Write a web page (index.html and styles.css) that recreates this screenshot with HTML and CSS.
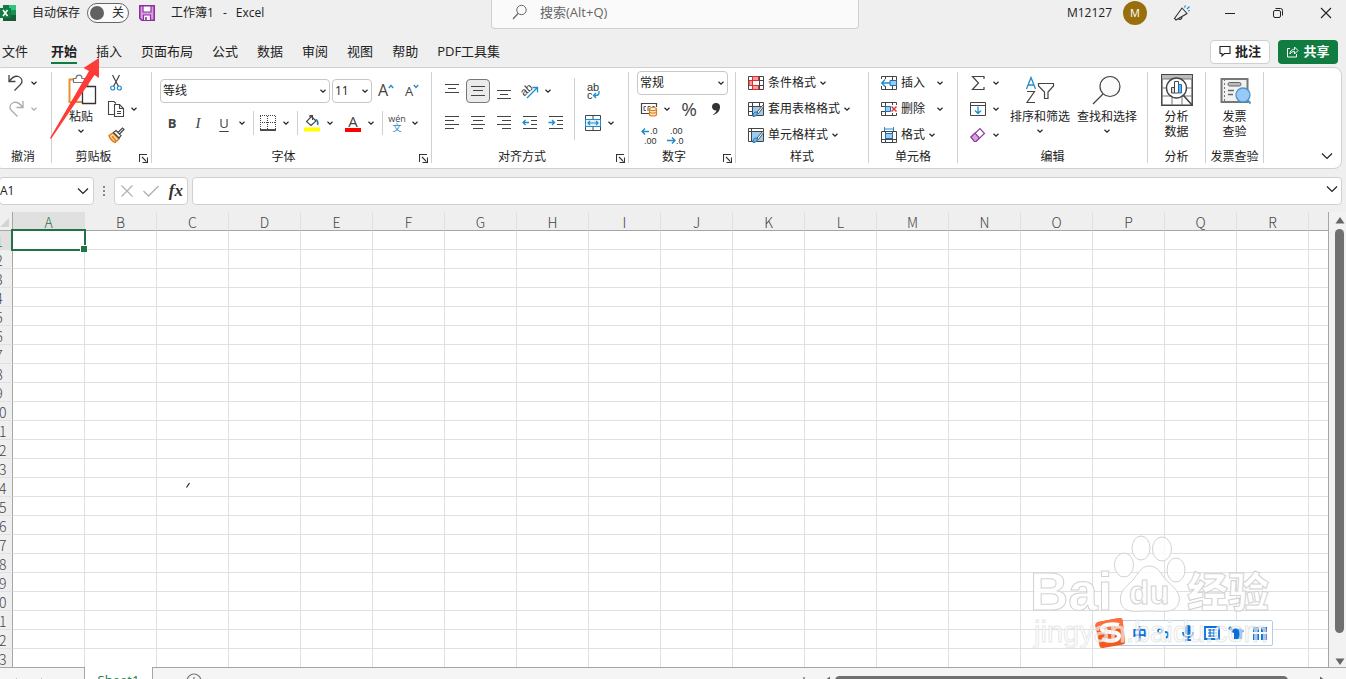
FILE: index.html
```html
<!DOCTYPE html>
<html lang="zh-CN">
<head>
    <meta charset="UTF-8">
    <meta name="viewport" content="width=device-width, initial-scale=1.0">
    <title>工作簿1 - Excel</title>
    <link rel="stylesheet" href="styles.css">
</head>
<body>
    <svg class="defs" width="0" height="0">
        <symbol id="chev" viewBox="0 0 8 8"><path d="M1.5 2.8L4 5.2L6.5 2.8" fill="none" stroke="currentColor" stroke-width="1.2"/></symbol>
        <symbol id="chev-big" viewBox="0 0 12 8"><path d="M1 1.5L6 6.5L11 1.5" fill="none" stroke="currentColor" stroke-width="1.2"/></symbol>
        <symbol id="launch" viewBox="0 0 9 9"><path d="M.5 8V.5H8M3 3L7.5 7.5M8.5 3.5V8.5H3.5" fill="none" stroke="#333" stroke-width="1.1"/></symbol>
        <symbol id="gridicon" viewBox="0 0 16 16"><path d="M.5 1.5H15.5V14.5H.5ZM.5 5.5H15.5M.5 10.5H15.5M4.5 1.5V14.5M11.5 1.5V14.5" fill="#fff" stroke="#444"/></symbol>
        <symbol id="brush" viewBox="0 0 16 16"><path d="M5 15C5 12 7 10 9 11.5C10 13.5 8 15.5 5 15.5Z" fill="#6ab4ec" stroke="#2072b8"/><path d="M9 11L15 4L16 5L10.5 12.5Z" fill="#fff" stroke="#555"/></symbol>
    </svg>

    <header class="titlebar">
        <div class="title-left">
            <svg class="logo" width="16" height="16" viewBox="0 0 16 16"><path d="M3 0H16V16H3Z" fill="#21a366"/><path d="M3 0H9V5H3Z" fill="#107c41"/><path d="M9 0H16V5H9Z" fill="#33c481"/><path d="M3 10H16V16H3Z" fill="#185c37"/><path d="M9 5H16V10H9Z" fill="#1a8f55"/><path d="M0 3H11V13H0Z" fill="#107c41"/><path d="M3 5L7.5 11M7.5 5L3 11" stroke="#fff" stroke-width="1.6"/></svg>
            <label for="autosave">自动保存</label>
            <label class="switch"><input type="checkbox" id="autosave"><span>关</span></label>
            <button class="save" aria-label="保存"><svg width="16" height="16" viewBox="0 0 16 16"><path d="M.8 .8H15.2V15.2H2.8L.8 13.2Z" fill="#d9a0e0" stroke="#8e2f9e" stroke-width="1.6"/><path d="M4 1H12V7H4Z" fill="#fff" stroke="#8e2f9e" stroke-width="1.2"/><path d="M4.5 15V10H11.5V15" fill="#fff" stroke="#8e2f9e" stroke-width="1.2"/><path d="M7 12V15" stroke="#8e2f9e" stroke-width="1.6"/></svg></button>
            <span class="doc"><span>工作簿1</span><span>-</span><span>Excel</span></span>
        </div>
        <div class="search">
            <svg width="16" height="16" viewBox="0 0 16 16"><circle cx="9.5" cy="6" r="4.7" fill="none" stroke="#666"/><path d="M6 9.5L1 15" stroke="#666" stroke-width="1.2"/></svg>
            <input type="text" aria-label="搜索" placeholder="搜索(Alt+Q)">
        </div>
        <div class="title-right">
            <span>M12127</span>
            <span class="avatar">M</span>
            <button class="win" aria-label="笔"><svg width="18" height="16" viewBox="0 0 18 16"><path d="M9 3L14 8.5L3 15L1.5 13.5ZM5 13.5C7 15.5 9 14 9 11.5" fill="none" stroke="#333" stroke-width="1.1"/><path d="M11.5 2.5L12.5 .5M14 4L16.5 1.5M15 6L17 5.5" stroke="#1e8bcd" stroke-width="1.2"/></svg></button>
            <button class="win" aria-label="最小化"><svg width="12" height="12"><path d="M1 6.5H11" stroke="#222"/></svg></button>
            <button class="win" aria-label="还原"><svg width="12" height="12"><rect x="1.5" y="3.5" width="7" height="7" rx="1.5" fill="none" stroke="#222"/><path d="M3.5 1.5H8.5Q10.5 1.5 10.5 3.5V8.5" fill="none" stroke="#222"/></svg></button>
            <button class="win" aria-label="关闭"><svg width="12" height="12"><path d="M1 1L11 11M11 1L1 11" stroke="#222" stroke-width="1.1"/></svg></button>
        </div>
    </header>

    <nav class="tabs">
        <a href="#">文件</a>
        <a href="#" class="active">开始</a>
        <a href="#">插入</a>
        <a href="#">页面布局</a>
        <a href="#">公式</a>
        <a href="#">数据</a>
        <a href="#">审阅</a>
        <a href="#">视图</a>
        <a href="#">帮助</a>
        <a href="#">PDF工具集</a>
        <div class="tab-actions">
            <button class="comment"><svg width="12" height="12" viewBox="0 0 12 12"><path d="M1 1.5H11V8.5H5.5L3 11V8.5H1Z" fill="none" stroke="#222" stroke-width="1.1"/></svg>批注</button>
            <button class="share"><svg width="13" height="13" viewBox="0 0 13 13"><path d="M4 3.5H1.5V12H10.5V9M4 9C4 5.5 6 4.5 8.5 4.5V2L12 5.5L8.5 9V6.5C6.5 6.5 5 7 4 9Z" fill="none" stroke="#fff"/></svg>共享</button>
        </div>
    </nav>

    <section class="ribbon">
        <div class="group g-undo">
            <div class="body rows3">
                <div class="row"><button class="ic" aria-label="撤消"><svg width="18" height="18" viewBox="0 0 18 18"><path d="M2 1V7.5H8.5M2.3 7.2C5 3.5 8 1.5 11.5 2.5C15.5 4 16 8 13.5 10.5L7.5 16.5" fill="none" stroke="#444" stroke-width="1.3"/></svg></button><button class="dd" aria-label="更多"><svg><use href="#chev"/></svg></button></div>
                <div class="row off"><button class="ic" aria-label="恢复"><svg width="18" height="18" viewBox="0 0 18 18"><path d="M16 1V7.5H9.5M15.7 7.2C13 3.5 10 1.5 6.5 2.5C2.5 4 2 8 4.5 10.5L10.5 16.5" fill="none" stroke="#aaa" stroke-width="1.3"/></svg></button><button class="dd" aria-label="更多"><svg><use href="#chev"/></svg></button></div>
            </div>
            <div class="foot"><span>撤消</span></div>
        </div>

        <div class="group g-clip">
            <div class="body">
                <button class="big paste"><svg width="30" height="32" viewBox="0 0 30 32"><path d="M3.500 5.500H21.500V28H3.500Z" fill="#fff" stroke="#e8912d" stroke-width="2"/><path d="M7.500 8.500V4.500H10C10 0 16 0 16 4.500H18.500V8.500Z" fill="#fff" stroke="#777" stroke-width="1.2"/><path d="M16.500 12.500H29.500V29.500H16.500Z" fill="#fff" stroke="#333" stroke-width="1.3"/></svg><span>粘贴</span><svg class="ch"><use href="#chev"/></svg></button>
                <div class="rows3">
                    <div class="row"><button class="ic" aria-label="剪切"><svg width="12" height="16" viewBox="0 0 12 16"><path d="M2.5 0L8.5 11.5M9.5 0L3.5 11.5" stroke="#444" stroke-width="1.2"/><circle cx="2.7" cy="13" r="2" fill="none" stroke="#1e8bcd" stroke-width="1.2"/><circle cx="9.3" cy="13" r="2" fill="none" stroke="#1e8bcd" stroke-width="1.2"/></svg></button></div>
                    <div class="row"><button class="ic" aria-label="复制"><svg width="18" height="18" viewBox="0 0 18 18"><path d="M7 14.5H1.5V1.5H7L9 3.5M7.5 4.5H12.5L16.5 8.5V16.5H7.5ZM12.5 4.5V8.5H16.5M10 11.5H14M10 13.5H14" fill="none" stroke="#444" stroke-width="1.1"/></svg></button><button class="dd" aria-label="更多"><svg><use href="#chev"/></svg></button></div>
                    <div class="row"><button class="ic" aria-label="格式刷"><svg width="17" height="16" viewBox="0 0 17 16"><path d="M5 6L11 12L7 15.5C4 14 2 12 1 8.5Z" fill="#fbd9a8" stroke="#e07b14" stroke-width="1.4"/><path d="M4 9L8 14" stroke="#e07b14" stroke-width="1.3"/><path d="M5.5 5.5L8 3.5L13 8.5L11 11ZM10 5.5L14.5 1L16 2.5L11.5 7" fill="#fff" stroke="#444" stroke-width="1.2"/></svg></button></div>
                </div>
            </div>
            <div class="foot"><span>剪贴板</span><button aria-label="剪贴板设置"><svg><use href="#launch"/></svg></button></div>
        </div>

        <div class="group g-font">
            <div class="body rows2">
                <div class="row">
                    <div class="combo font-name"><select aria-label="字体"><option>等线</option></select><svg><use href="#chev"/></svg></div>
                    <div class="combo font-size"><select aria-label="字号"><option>11</option></select><svg><use href="#chev"/></svg></div>
                    <button class="ic grow" aria-label="增大字号">A<svg width="6" height="5"><path d="M.8 4L3 1.5L5.2 4" fill="none" stroke="#1e8bcd" stroke-width="1.3"/></svg></button>
                    <button class="ic shrink" aria-label="减小字号">A<svg width="6" height="5"><path d="M.8 1L3 3.5L5.2 1" fill="none" stroke="#1e8bcd" stroke-width="1.3"/></svg></button>
                </div>
                <div class="row">
                    <div class="biu"><button class="ic b">B</button><button class="ic i">I</button><button class="ic u">U</button></div><button class="dd" aria-label="下划线"><svg><use href="#chev"/></svg></button>
                    <i class="sep"></i>
                    <button class="ic" aria-label="边框"><svg width="16" height="16" viewBox="0 0 16 16"><path d="M0 .5H16M0 7.5H16M.5 1V14M7.5 1V14M15.5 1V14" stroke="#444" stroke-dasharray="1 1"/><path d="M0 15H16" stroke="#111" stroke-width="1.5"/></svg></button><button class="dd" aria-label="更多"><svg><use href="#chev"/></svg></button>
                    <i class="sep"></i>
                    <button class="ic" aria-label="填充颜色"><svg width="16" height="18" viewBox="0 0 16 18"><path d="M7.5 2.5L12 7L7 11.5L2.5 7.5ZM6 5V1.5H8.5V6" fill="none" stroke="#444" stroke-width="1.1"/><path d="M11.5 5.5C14 6 14 9 13.5 11" fill="none" stroke="#1e6fb0" stroke-width="1.6"/><path d="M0 13.5H16V17.5H0Z" fill="#ff0"/></svg></button><button class="dd" aria-label="更多"><svg><use href="#chev"/></svg></button>
                    <button class="ic color" aria-label="字体颜色">A</button><button class="dd" aria-label="更多"><svg><use href="#chev"/></svg></button>
                    <i class="sep"></i>
                    <button class="ic wen"><span>wén</span><b>文</b></button><button class="dd" aria-label="更多"><svg><use href="#chev"/></svg></button>
                </div>
            </div>
            <div class="foot"><span>字体</span><button aria-label="字体设置"><svg><use href="#launch"/></svg></button></div>
        </div>

        <div class="group g-align">
            <div class="body">
                <div class="rows2">
                    <div class="row gap2">
                        <button class="ic" aria-label="顶端对齐"><svg width="16" height="16"><path d="M1 1.5H15M4 5.5H12M1 9.5H15" stroke="#444"/></svg></button>
                        <button class="ic on" aria-label="垂直居中"><svg width="16" height="16"><path d="M1 3.5H15M3 7.5H13M1 12.5H15" stroke="#444"/></svg></button>
                        <button class="ic" aria-label="底端对齐"><svg width="16" height="16"><path d="M1 7.5H15M4 11.5H12M1 15.5H15" stroke="#444"/></svg></button>
                        <div class="row"><button class="ic" aria-label="方向"><svg width="18" height="18" viewBox="0 0 18 18"><text class="tiny" x="0" y="12" font-size="11" transform="rotate(-40 5 9)">ab</text><path d="M6 16L16 6M11.5 5.5H16.5V10.5" fill="none" stroke="#1e8bcd" stroke-width="1.3"/></svg></button><button class="dd" aria-label="更多"><svg><use href="#chev"/></svg></button></div>
                    </div>
                    <div class="row gap2">
                        <button class="ic" aria-label="左对齐"><svg width="16" height="16"><path d="M1 1.5H15M1 5.5H10M1 9.5H15M1 13.5H10" stroke="#444"/></svg></button>
                        <button class="ic" aria-label="居中"><svg width="16" height="16"><path d="M1 1.5H15M3 5.5H13M1 9.5H15M3 13.5H13" stroke="#444"/></svg></button>
                        <button class="ic" aria-label="右对齐"><svg width="16" height="16"><path d="M1 1.5H15M6 5.5H15M1 9.5H15M6 13.5H15" stroke="#444"/></svg></button>
                        <button class="ic" aria-label="减少缩进"><svg width="16" height="16"><path d="M1 1.5H15M9 5.5H15M9 9.5H15M1 13.5H15" stroke="#444"/><path d="M1.5 7.5H7M3.5 5L1 7.5L3.5 10" fill="none" stroke="#1e8bcd" stroke-width="1.3"/></svg></button>
                        <button class="ic" aria-label="增加缩进"><svg width="16" height="16"><path d="M1 1.5H15M9 5.5H15M9 9.5H15M1 13.5H15" stroke="#444"/><path d="M.5 7.5H6M4 5L6.5 7.5L4 10" fill="none" stroke="#1e8bcd" stroke-width="1.3"/></svg></button>
                    </div>
                </div>
                <i class="sep tall"></i>
                <div class="rows2">
                    <div class="row"><button class="ic" aria-label="自动换行"><svg width="16" height="18" viewBox="0 0 16 18"><text class="tiny" x="2" y="9" font-size="11">ab</text><text class="tiny" x="2" y="17" font-size="11">c</text><path d="M14 9V10.5Q14 13.500 11 13.500H9M11 11L8.500 13.500L11 16" fill="none" stroke="#1e8bcd" stroke-width="1.3"/></svg></button></div>
                    <div class="row"><button class="ic" aria-label="合并后居中"><svg width="16" height="16" viewBox="0 0 16 16"><path d="M.5 .5H15.5V15.5H.5ZM8 .5V4M8 12V15.5" fill="none" stroke="#444"/><path d="M.5 4.5H15.5V11.5H.5Z" fill="#e3f1fb" stroke="#1e8bcd"/><path d="M3 8H13M5 6L3 8L5 10M11 6L13 8L11 10" fill="none" stroke="#1e8bcd" stroke-width="1.2"/></svg></button><button class="dd" aria-label="更多"><svg><use href="#chev"/></svg></button></div>
                </div>
            </div>
            <div class="foot"><span>对齐方式</span><button aria-label="对齐设置"><svg><use href="#launch"/></svg></button></div>
        </div>

        <div class="group g-num">
            <div class="body rows3">
                <div class="row"><div class="combo num-format"><select aria-label="数字格式"><option>常规</option></select><svg><use href="#chev"/></svg></div></div>
                <div class="row">
                    <button class="ic" aria-label="会计数字格式"><svg width="18" height="16" viewBox="0 0 18 16"><path d="M16.5 6V2.5H1.5V12.5H9" fill="none" stroke="#444" stroke-width="1.2"/><path d="M6 5.5H4V9.5H6M8 10V5.5H10.5M12.5 5.5H14.5" fill="none" stroke="#555"/><path d="M9.5 8V13.5C9.5 15.5 16.5 15.5 16.5 13.5V8" fill="#fde3c4" stroke="#e07b14" stroke-width="1.2"/><ellipse cx="13" cy="8" rx="3.5" ry="1.5" fill="#fff" stroke="#e07b14" stroke-width="1.2"/><path d="M9.5 11C10.5 12.5 15.5 12.5 16.5 11" fill="none" stroke="#e07b14"/></svg></button><button class="dd" aria-label="更多"><svg><use href="#chev"/></svg></button>
                    <button class="ic pct">%</button>
                    <button class="ic comma" aria-label="千位分隔"><svg width="10" height="14" viewBox="0 0 10 14"><path d="M5 1A3.7 3.7 0 1 0 5.5 8.3C5 10.5 3.5 12 1.5 13C6 12.5 9 9 9 5A4 4 0 0 0 5 1Z" fill="#333"/></svg></button>
                </div>
                <div class="row gap2">
                    <button class="ic" aria-label="增加小数位数"><svg width="17" height="17" viewBox="0 0 17 17"><path d="M1 4.5H8M4 1.5L1 4.5L4 7.5" fill="none" stroke="#1e8bcd" stroke-width="1.4"/><text class="tiny" x="9" y="7" font-size="9">.0</text><text class="tiny" x="3" y="17" font-size="9">.00</text></svg></button>
                    <button class="ic" aria-label="减少小数位数"><svg width="17" height="17" viewBox="0 0 17 17"><text class="tiny" x="3" y="7" font-size="9">.00</text><path d="M0 13.500H7.500M5 10.500L8 13.500L5 16.500" fill="none" stroke="#1e8bcd" stroke-width="1.4"/><text class="tiny" x="9" y="17" font-size="9">.0</text></svg></button>
                </div>
            </div>
            <div class="foot"><span>数字</span><button aria-label="数字设置"><svg><use href="#launch"/></svg></button></div>
        </div>

        <div class="group g-style">
            <div class="body rows3">
                <button class="item"><svg width="16" height="16"><use href="#gridicon"/><path d="M4.5 1.5H10.5V5.5H4.5ZM1 5.5H4.5V10.5H1ZM4.5 10.5H10.5V14.5H4.5Z" fill="#ff9b9b" stroke="#d92c2c"/></svg>条件格式<svg class="ch"><use href="#chev"/></svg></button>
                <button class="item"><svg width="16" height="16"><use href="#gridicon"/><path d="M5 6H15V14H5Z" fill="#9accf2"/><use href="#brush"/></svg>套用表格格式<svg class="ch"><use href="#chev"/></svg></button>
                <button class="item"><svg width="16" height="16"><path d="M.5 1.5H15.5V14.5H.5ZM.5 4.5H15.5M3.5 1.5V14.5" fill="#fff" stroke="#444"/><path d="M4 5H15V14H4Z" fill="#9accf2"/><use href="#brush"/></svg>单元格样式<svg class="ch"><use href="#chev"/></svg></button>
            </div>
            <div class="foot"><span>样式</span></div>
        </div>

        <div class="group g-cell">
            <div class="body rows3">
                <button class="item wide"><svg width="16" height="16"><use href="#gridicon"/><path d="M0 4H9V11H0Z" fill="#fff"/><path d="M9 5.5H15.5V10.5H9Z" fill="#9accf2" stroke="#1e6fb0"/><path d="M.5 8H9M4 4.5L.8 8L4 11.5" fill="none" stroke="#1e8bcd" stroke-width="1.4"/></svg>插入<svg class="ch"><use href="#chev"/></svg></button>
                <button class="item wide"><svg width="16" height="16"><use href="#gridicon"/><path d="M0 6H5V10H0ZM9 4H16V12H9Z" fill="#fff"/><path d="M4.5 5.5H9.5V10.5H4.5Z" fill="#9accf2" stroke="#1e6fb0"/><path d="M10.5 5.5L15.5 10.5M15.5 5.5L10.5 10.5" stroke="#e03a3a" stroke-width="1.5"/></svg>删除<svg class="ch"><use href="#chev"/></svg></button>
                <button class="item"><svg width="16" height="16"><path d="M.5 4.5H15.5V15.5H.5ZM.5 12.5H15.5M4.5 4.5V15.5M11.5 4.5V15.5" fill="#fff" stroke="#444"/><path d="M4.5 6.5H11.5V11.5H4.5Z" fill="#9accf2" stroke="#1e6fb0"/><path d="M3.5 0V4M12.5 0V4M3.5 2H12.5" stroke="#1e8bcd"/></svg>格式<svg class="ch"><use href="#chev"/></svg></button>
            </div>
            <div class="foot"><span>单元格</span></div>
        </div>

        <div class="group g-edit">
            <div class="body">
                <div class="rows3">
                    <div class="row"><button class="ic" aria-label="求和"><svg width="14" height="16"><path d="M13 4V1.5H1.5L7.5 8L1.5 14.5H13V12" fill="none" stroke="#444" stroke-width="1.2"/></svg></button><button class="dd" aria-label="更多"><svg><use href="#chev"/></svg></button></div>
                    <div class="row"><button class="ic" aria-label="填充"><svg width="16" height="14"><path d="M.5 .5H15.5V13.5H.5ZM.5 3.5H15.5" fill="none" stroke="#444"/><path d="M8 4.5V11.5M5 8.5L8 11.5L11 8.5" fill="none" stroke="#1e8bcd" stroke-width="1.3"/></svg></button><button class="dd" aria-label="更多"><svg><use href="#chev"/></svg></button></div>
                    <div class="row"><button class="ic" aria-label="清除"><svg width="16" height="16"><path d="M1 10L10 1.5L14.5 6.5L6 14.5H4.5Z" fill="#fff" stroke="#8e3fa0" stroke-width="1.2"/><path d="M1 10L5 6L9.5 11L6 14.5H4.5Z" fill="#d9a0e0" stroke="#8e3fa0" stroke-width="1.2"/></svg></button><button class="dd" aria-label="更多"><svg><use href="#chev"/></svg></button></div>
                </div>
                <button class="big"><svg width="30" height="32" viewBox="0 0 30 32"><path d="M1.5 15L6 3.5L10.5 15M3 11H9" fill="none" stroke="#1e8bcd" stroke-width="1.3"/><path d="M2 17.5H9.5L2 28.5H10" fill="none" stroke="#444" stroke-width="1.2"/><path d="M13.5 9.5H28.5V12L23 18V24.5H19.5V18L13.5 12Z" fill="#fff" stroke="#444" stroke-width="1.2"/></svg><span>排序和筛选</span><svg class="ch"><use href="#chev"/></svg></button>
                <button class="big find"><svg width="30" height="32" viewBox="0 0 30 32"><circle cx="18" cy="12.5" r="10" fill="#fafafa" stroke="#444" stroke-width="1.2"/><path d="M11 20L1 30" stroke="#444" stroke-width="1.3"/></svg><span>查找和选择</span><svg class="ch"><use href="#chev"/></svg></button>
            </div>
            <div class="foot"><span>编辑</span></div>
        </div>

        <div class="group g-tool">
            <div class="body">
                <button class="big"><svg width="32" height="32" viewBox="0 0 32 32"><path d="M.8 .8H31.2V31.2H.8Z" fill="#fff" stroke="#444" stroke-width="1.5"/><path d="M1 1H31V5H1Z" fill="#bbb"/><path d="M1 5H31M1 14H31M1 22H31M11 22V31M21 22V31" stroke="#777"/><circle cx="15.5" cy="14" r="10" fill="#fff" stroke="#444" stroke-width="1.4"/><path d="M22.5 21.5L31 31" stroke="#444" stroke-width="1.6"/><path d="M10.5 13.5H13.5V19H10.5Z" fill="#ddd" stroke="#444"/><path d="M13.5 7.5H17.5V19H13.5Z" fill="#fff" stroke="#444"/><path d="M17.5 10.5H20.5V19H17.5Z" fill="#6ab4ec" stroke="#1e6fb0"/></svg><span>分析<br>数据</span></button>
            </div>
            <div class="foot"><span>分析</span></div>
        </div>

        <div class="group g-tool">
            <div class="body">
                <button class="big"><svg width="32" height="32" viewBox="0 0 32 32"><path d="M2.500 5H28.500V28H2.500Z" fill="#f2f2f2" stroke="#777" stroke-width="2"/><path d="M5.5 5V28" stroke="#777" stroke-dasharray="2 2"/><rect x="9" y="8.5" width="13" height="3.5" rx="1.7" fill="#bbb" stroke="#666"/><path d="M9 16.5H15M9 20.5H14" stroke="#666" stroke-width="1.3"/><circle cx="24" cy="21" r="7" fill="#99c9f7" stroke="#4a94cc" stroke-width="1.3"/><path d="M28.500 26L31.500 29.500" stroke="#4a94cc" stroke-width="2"/></svg><span>发票<br>查验</span></button>
            </div>
            <div class="foot"><span>发票查验</span></div>
        </div>

        <button class="collapse" aria-label="折叠功能区"><svg width="12" height="8"><use href="#chev-big"/></svg></button>
    </section>

    <section class="formula-bar">
        <div class="box name-box"><input type="text" aria-label="名称框" value="A1"><svg width="12" height="8"><use href="#chev-big"/></svg></div>
        <svg class="dots" width="4" height="12"><path d="M1 1H3V3H1ZM1 5H3V7H1ZM1 9H3V11H1Z" fill="#888"/></svg>
        <div class="box fx">
            <button aria-label="取消"><svg width="12" height="12"><path d="M.5 .5L11.5 11.5M11.5 .5L.5 11.5" stroke="#b0b0b0" stroke-width="1.2"/></svg></button>
            <button aria-label="输入"><svg width="16" height="12"><path d="M.5 6L5.5 11L15.5 1" fill="none" stroke="#b0b0b0" stroke-width="1.3"/></svg></button>
            <button class="fn">fx</button>
        </div>
        <div class="box formula"><input type="text" aria-label="编辑栏"><svg width="12" height="8"><use href="#chev-big"/></svg></div>
    </section>

    <main class="sheet">
        <div class="viewport">
            <table>
                <thead><tr id="cols"><th class="corner"><svg width="9" height="9"><path d="M9 0V9H0Z" fill="#d4d4d4"/></svg></th></tr></thead>
                <tbody id="rows"></tbody>
            </table>
        </div>
        <div class="vscroll">
            <svg width="10" height="8"><path d="M5 1L9.5 7.5H.5Z" fill="#666"/></svg>
            <i class="thumb"></i>
            <svg width="10" height="8"><path d="M5 7L9.5 .5H.5Z" fill="#666"/></svg>
        </div>
    </main>

    <footer class="sheet-tabs">
        <div class="nav">
            <svg width="6" height="10"><path d="M5 1L1 5L5 9" fill="none" stroke="#bbb"/></svg>
            <svg width="6" height="10"><path d="M1 1L5 5L1 9" fill="none" stroke="#bbb"/></svg>
        </div>
        <button class="sheet-tab">Sheet1</button>
        <div class="add"><button aria-label="新工作表"><svg width="16" height="16"><circle cx="8" cy="8" r="7" fill="none" stroke="#777" stroke-width="1.2"/><path d="M8 4V12M4 8H12" stroke="#777" stroke-width="1.2"/></svg></button></div>
        <div class="hscroll">
            <svg class="dots" width="4" height="12"><path d="M1 1H3V3H1ZM1 5H3V7H1ZM1 9H3V11H1Z" fill="#999"/></svg>
            <svg width="8" height="10"><path d="M1 5L7 .5V9.5Z" fill="#666"/></svg>
            <i class="thumb"></i>
            <svg width="8" height="10"><path d="M7 5L1 .5V9.5Z" fill="#666"/></svg>
        </div>
    </footer>

    <!-- 输入法工具条 -->
    <div class="ime">
        <svg class="sogou" width="32" height="32" viewBox="0 0 32 32"><path d="M4 5L25 1Q28 .5 28.5 3L31 24Q31.5 27 29 27.5L9 31Q6 31.5 5.5 29L1.5 9Q1 6 4 5Z" fill="#f4581c"/><path d="M4 5L25 1Q28 .5 28.5 3L29.5 11L2.5 14L1.5 9Q1 6 4 5Z" fill="#fa6f3c"/><path d="M25 8C17 6 8 8 8 12C8 17 25 13 25 19C25 24 15 25 8 22" fill="none" stroke="#fff" stroke-width="4"/></svg>
        <b>中</b>
        <svg width="16" height="16"><circle cx="4" cy="6" r="2" fill="none" stroke="#0a6fdc" stroke-width="1.5"/><path d="M9 7C13 7 13 11 10 13" fill="none" stroke="#0a6fdc" stroke-width="2"/></svg>
        <svg width="16" height="16"><rect x="5" y="0" width="6" height="10" rx="3" fill="#0a6fdc"/><path d="M3 7C3 14 13 14 13 7M8 12V15M5 15H11" fill="none" stroke="#0a6fdc" stroke-width="1.8"/></svg>
        <svg width="16" height="16"><path d="M1 2H15V14H1Z" fill="none" stroke="#0a6fdc" stroke-width="1.8"/><path d="M4 5H13M4 8H13M4 11H13M6 4V12M10 4V12" stroke="#0a6fdc" stroke-width="1.2"/></svg>
        <svg width="16" height="16"><path d="M5 4L8 3Q10 5 12 3L16 6L14 8V14H6V8L3 7Z" fill="#0a6fdc"/><circle cx="2.5" cy="3.5" r="2" fill="#0a6fdc"/></svg>
        <svg width="16" height="16"><path d="M1 2H7V7H1ZM9 2H15V7H9ZM1 9H7V15H1ZM9 9H15V15H9Z" fill="#0a6fdc"/></svg>
    </div>

    <svg class="watermark" width="250" height="124" viewBox="0 0 250 124">
        <g class="wm">
            <ellipse cx="99" cy="35" rx="9.5" ry="12"/><ellipse cx="116" cy="18" rx="9" ry="12"/>
            <ellipse cx="137" cy="19" rx="9.5" ry="12"/><ellipse cx="151" cy="40" rx="9" ry="12"/>
            <path d="M124 36C133 36 136 44 141 50C149 57 156 63 154 72C151 84 138 81 124 81C111 81 99 84 96 73C93 62 101 57 108 50C113 44 116 36 124 36Z"/>
            <text class="wm-latin" x="5" y="80" font-size="53">Bai</text>
            <text class="wm-latin" x="104" y="74" font-size="33">du</text>
            <text class="wm-cn" x="162" y="77" font-size="41">经验</text>
        </g>
        <text class="wm-url" x="9" y="112" font-size="29">jingyan.baidu.com</text>
    </svg>

    <svg class="arrow" width="54" height="84" viewBox="0 0 54 84"><path d="M50 1L34.5 11L40 14L1 81L2 82L45.5 18L50 21Z" fill="#ff3b38"/></svg>

    <script src="script.js"></script>
</body>
</html>
```
FILE: styles.css
```css
* {
    box-sizing: border-box;
}

body {
    margin: 0;
    height: 100vh;
    overflow: hidden;
    display: flex;
    flex-direction: column;
    position: relative;
    background-color: #efefef;
    color: #222;
    font-family: "Open Sans", "Noto Sans CJK SC", sans-serif;
    font-size: 12px;
    line-height: 16px;
}

body > * {
    flex-shrink: 0;
}

button, input, select {
    font: inherit;
    color: inherit;
    background: none;
    border: none;
    padding: 0;
    margin: 0;
    outline: none;
}

button {
    display: flex;
    align-items: center;
    justify-content: center;
}

svg {
    display: block;
    flex-shrink: 0;
    overflow: visible;
}

.defs {
    position: absolute;
}

/* 标题栏 */
.titlebar {
    display: grid;
    grid-template-columns: 1fr 368px 1fr;
    height: 29px;
}

.title-left, .title-right {
    display: flex;
    align-items: center;
    padding-bottom: 4px;
}

.title-left label {
    margin-left: 16px;
}

.title-left .switch {
    display: flex;
    align-items: center;
    gap: 8px;
    width: 42px;
    height: 20px;
    margin-left: 7px;
    padding-left: 2px;
    border: 1px solid #666;
    border-radius: 10px;
    background-color: #fafafa;
}

.switch input {
    appearance: none;
    width: 14px;
    height: 14px;
    border-radius: 50%;
    background-color: #616161;
}

.save {
    margin: 0 16px 0 10px;
}

.doc {
    display: flex;
    gap: 9px;
}

.search {
    display: flex;
    align-items: center;
    gap: 12px;
    margin-left: 2px;
    margin-right: -2px;
    padding: 0 20px 4px;
    border: 1px solid #d0d0d0;
    border-top: none;
    border-radius: 0 0 4px 4px;
    background-color: #fafafa;
    font-size: 13px;
}

.search input {
    flex: 1;
}

.search input::placeholder {
    color: #666;
}

.title-right {
    justify-content: flex-end;
    gap: 8px;
}

.avatar {
    width: 24px;
    height: 24px;
    margin: 0 7px 0 3px;
    border-radius: 50%;
    background-color: #986f0b;
    color: #fff;
    font-size: 11px;
    line-height: 24px;
    text-align: center;
}

.win {
    width: 40px;
    height: 24px;
}

/* 选项卡 */
.tabs {
    display: flex;
    align-items: flex-start;
    gap: 19px;
    height: 38px;
    padding: 11px 8px 0 2px;
    font-size: 13px;
}

.tabs a {
    padding: 2px 0;
    color: #222;
    text-decoration: none;
    line-height: 18px;
    border-bottom: 2px solid transparent;
}

.tabs .active {
    margin-left: 4px;
    font-weight: bold;
    border-color: #107c41;
}

.tab-actions {
    display: flex;
    gap: 8px;
    margin-left: auto;
}

.tab-actions button {
    gap: 4px;
    width: 60px;
    height: 24px;
    padding-bottom: 2px;
    border-radius: 4px;
    font-weight: bold;
}

.comment {
    border: 1px solid #d0d0d0;
    background-color: #fff;
}

.tab-actions .share {
    background-color: #107c41;
    color: #fff;
}

/* 功能区 */
.ribbon {
    display: flex;
    height: 102px;
    margin: 0 4px 0 -6px;
    padding: 4px 0;
    border: 1px solid #d0d0d0;
    border-radius: 8px;
    background-color: #fff;
}

.group {
    display: flex;
    flex-direction: column;
    height: 91px;
    border-right: 1px solid #d0d0d0;
}

.body {
    display: flex;
    flex: 1;
}

.foot {
    display: flex;
    height: 15px;
    line-height: 17px;
}

.foot span {
    flex: 1;
    text-align: center;
    white-space: nowrap;
}

.foot button {
    width: 16px;
    align-items: flex-end;
}

.foot svg {
    width: 9px;
    height: 9px;
}

.row {
    display: flex;
    align-items: center;
}

.gap2 {
    gap: 2px;
}

.rows3 {
    display: flex;
    flex-direction: column;
    gap: 4px;
}

.rows3 > * {
    height: 22px;
}

.rows2 {
    display: flex;
    flex-direction: column;
    gap: 8px;
    padding-top: 7px;
}

.rows2 > * {
    height: 24px;
}

.ic {
    width: 24px;
    height: 24px;
    color: #444;
}

.dd {
    width: 12px;
    height: 24px;
}

.dd svg, .combo svg, .ch {
    width: 8px;
    height: 8px;
}

.off {
    color: #aaa;
}

.on {
    border: 1px solid #777;
    border-radius: 4px;
    background-color: #ebebeb;
}

.sep {
    width: 1px;
    height: 24px;
    margin: 0 2px 0 5px;
    background-color: #d0d0d0;
}

.tiny {
    font-family: "Liberation Sans", sans-serif;
    fill: #333;
}

.combo {
    display: flex;
    align-items: center;
    height: 24px;
    padding: 0 2px;
    border: 1px solid #c8c8c8;
    border-radius: 4px;
}

.combo select {
    flex: 1;
    min-width: 0;
    appearance: none;
}

.big {
    flex-direction: column;
    justify-content: flex-start;
    align-items: center;
    padding-top: 2px;
    line-height: 15px;
    white-space: nowrap;
}

.big > svg:first-child {
    margin-bottom: 3px;
}

.big .ch {
    margin-top: 3px;
}

.item {
    gap: 4px;
    align-items: center;
    justify-content: flex-start;
    white-space: nowrap;
}

.item .ch {
    margin-left: -1px;
}

.wide .ch {
    margin-left: 7px;
}

.g-undo {
    width: 57px;
}

.g-undo .body {
    padding-left: 9px;
}

.g-clip {
    width: 100px;
}

.g-clip .body {
    padding-left: 14px;
    gap: 8px;
}

.g-font {
    width: 280px;
}

.g-font .body {
    padding-left: 8px;
}

.font-name {
    width: 170px;
}

.font-size {
    width: 40px;
    margin: 0 2px;
}

.grow, .shrink {
    align-items: flex-start;
    font-size: 16px;
    line-height: 22px;
}

.shrink {
    margin-left: 2px;
    font-size: 13px;
    line-height: 24px;
}

.grow svg, .shrink svg {
    margin-top: 5px;
}

.biu {
    display: flex;
    gap: 2px;
}

.b {
    font-weight: bold;
    font-size: 13px;
}

.i {
    font-family: "Liberation Serif", serif;
    font-style: italic;
    font-size: 15px;
}

.u {
    font-size: 13px;
    text-decoration: underline;
    text-underline-offset: 3px;
}

.color {
    width: 16px;
    height: 18px;
    margin: 0 4px 0 9px;
    border-bottom: 4px solid #f00;
    font-size: 15px;
}

.wen {
    flex-direction: column;
    font-size: 9px;
    line-height: 9px;
}

.wen b {
    color: #1e8bcd;
    font-weight: normal;
}

.g-align {
    width: 197px;
}

.g-align .body {
    padding-left: 8px;
}

.tall {
    height: 62px;
    margin: 6px 6px 0 6px;
}

.g-num {
    width: 107px;
}

.g-num .body {
    padding-left: 8px;
}

.num-format {
    width: 91px;
}

.pct {
    margin: 0 3px 0 4px;
    font-size: 19px;
}

.g-style {
    width: 133px;
}

.g-cell {
    width: 89px;
}

.g-style .body, .g-cell .body {
    padding-left: 12px;
}

.g-edit {
    width: 190px;
}

.g-edit .body {
    padding-left: 8px;
    gap: 8px;
}

.find {
    margin-left: -1px;
}

.g-tool {
    width: 58px;
}

.g-tool .body {
    justify-content: center;
}

.collapse {
    align-self: flex-end;
    margin: 0 8px 4px auto;
}

/* 编辑栏 */
.formula-bar {
    display: flex;
    align-items: center;
    height: 28px;
    margin: 8px 4px 7px 0;
}

.box {
    display: flex;
    align-items: center;
    height: 28px;
    border: 1px solid #d0d0d0;
    border-radius: 4px;
    background-color: #fff;
}

.box input {
    flex: 1;
    min-width: 0;
}

.name-box {
    width: 95px;
    margin-left: -1px;
    padding-right: 4px;
}

.formula-bar .dots {
    margin: 0 8px;
}

.fx {
    width: 74px;
    margin-right: 4px;
    padding: 0 4px 0 6px;
    justify-content: space-between;
}

.fn {
    font-family: "Liberation Serif", serif;
    font-style: italic;
    font-weight: bold;
    font-size: 17px;
    color: #333;
}

.formula {
    flex: 1;
    padding: 0 3px 4px 6px;
}

/* 工作表 */
.sheet {
    display: flex;
}

.viewport {
    flex: 1;
    min-width: 0;
    overflow: hidden;
    border-right: 1px solid #a6a6a6;
    background-color: #fff;
}

table {
    width: 1360px;
    min-width: calc(100% + 14px);
    margin-left: -14px;
    table-layout: fixed;
    border-collapse: separate;
    border-spacing: 0;
}

th, td {
    width: 72px;
    height: 19px;
    padding: 0;
    border-right: 1px solid #e0e0e0;
    border-bottom: 1px solid #e0e0e0;
}

th {
    padding-top: 2px;
    background-color: #efefef;
    color: #444;
    font-family: "Noto Sans CJK SC", sans-serif;
    font-size: 14px;
    font-weight: 300;
    line-height: 16px;
}

thead th {
    border-bottom-color: #a6a6a6;
}

th:first-child {
    width: 27px;
    border-right-color: #a6a6a6;
}

.corner svg {
    margin-left: 14px;
}

th.picked {
    background-color: #e0e0e0;
    color: #217346;
}

td.selected {
    position: relative;
}

/* 选中框和填充柄 */
td.selected::before {
    content: "";
    position: absolute;
    inset: -2px;
    border: 2px solid #217346;
}

td.selected::after {
    content: "";
    position: absolute;
    right: -3px;
    bottom: -3px;
    width: 6px;
    height: 6px;
    border: 1px solid #fff;
    border-width: 1px 0 0 1px;
    background-color: #217346;
}

td svg {
    margin: -4px 0 0 28px;
}

.vscroll {
    display: flex;
    flex-direction: column;
    align-items: center;
    width: 17px;
    padding: 4px 1px 2px 5px;
    background-color: #f2f2f2;
}

.vscroll .thumb {
    width: 9px;
    height: 404px;
    margin: 5px 0 auto;
}

.thumb {
    border-radius: 5px;
    background-color: #707070;
}

.sheet-tabs {
    display: flex;
    height: 26px;
    margin-top: -1px;
    position: relative;
    background-color: #f5f5f5;
}

.nav, .add {
    border-top: 1px solid #a6a6a6;
}

.nav {
    display: flex;
    gap: 22px;
    width: 84px;
    padding: 9px 0 0 12px;
}

.sheet-tab {
    width: 69px;
    border: 1px solid #a6a6a6;
    border-top: none;
    background-color: #fff;
    color: #217346;
    font-size: 13px;
}

.add {
    flex: 1;
    padding: 5px 0 0 33px;
}

.hscroll {
    display: flex;
    align-items: flex-start;
    width: 555px;
    padding: 8px 19px 0 11px;
    border-top: 1px solid #a6a6a6;
}

.hscroll .dots {
    margin-right: 17px;
}

.hscroll .thumb {
    flex: 1;
    height: 9px;
    margin: 0 31px 0 4px;
}

/* 浮在表格上面的内容 */
.ime {
    position: absolute;
    right: 73px;
    top: 620px;
    display: flex;
    align-items: center;
    gap: 8px;
    height: 26px;
    padding-right: 4px;
    border: 1px solid #b5cbea;
    border-radius: 2px;
    background-color: #fff;
}

.ime b {
    width: 16px;
    color: #0a6fdc;
    font-size: 15px;
}

.sogou {
    margin-left: -16px;
    margin-right: -2px;
}

.watermark {
    position: absolute;
    right: 71px;
    top: 530px;
}

.wm {
    fill: #fff;
    fill-opacity: .8;
    stroke: #d2d2d2;
    stroke-width: 1px;
}

.wm-latin {
    font-family: "Liberation Sans", sans-serif;
    font-weight: bold;
}

.wm-cn {
    font-family: "Noto Sans CJK SC", sans-serif;
    font-weight: 900;
}

.wm-url {
    font-family: "Liberation Sans", sans-serif;
    fill: #fff;
    fill-opacity: .6;
    stroke: #ddd;
    stroke-opacity: .7;
    stroke-width: 1px;
}

.arrow {
    position: absolute;
    left: 49px;
    top: 57px;
}
```
FILE: script.js
```js
const cols = document.getElementById("cols");
const rows = document.getElementById("rows");
const letters = "ABCDEFGHIJKLMNOPQRS";

for (const letter of letters) {
    const th = document.createElement("th");
    // S 列只露出一点
    th.textContent = letter === "S" ? "" : letter;
    if (letter === "A") th.className = "picked";
    cols.appendChild(th);
}

for (let r = 1; r <= 23; r++) {
    const tr = document.createElement("tr");
    const th = document.createElement("th");
    th.textContent = r;
    if (r === 1) th.className = "picked";
    tr.appendChild(th);
    for (let c = 0; c < letters.length; c++) {
        const td = document.createElement("td");
        if (r === 1 && c === 0) td.className = "selected";
        if (r === 14 && c === 2) {
            td.innerHTML = '<svg width="6" height="8"><path d="M1.5 6.5L4.5 2" stroke="#222" stroke-width="1.2"/></svg>';
        }
        tr.appendChild(td);
    }
    rows.appendChild(tr);
}
```
